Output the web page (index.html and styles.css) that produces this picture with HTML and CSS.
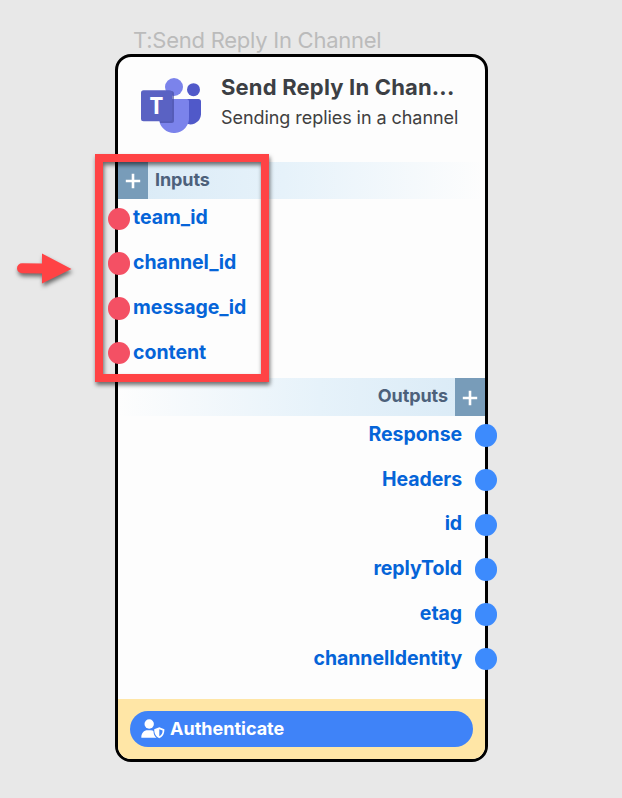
FILE: index.html
```html
<!DOCTYPE html>
<html lang="en">
<head>
<meta charset="utf-8">
<title>Send Reply In Channel</title>
<link rel="stylesheet" href="styles.css">
</head>
<body>
<main class="canvas">
  <section class="node">
    <div class="node-label">T:Send Reply In Channel</div>
    <div class="card">
      <header class="head">
        <svg class="logo" width="62" height="58" viewBox="0 0 62 58">
          <circle cx="53.500" cy="12.700" r="6.500" fill="#5059c9"/>
          <path d="M44 22H58.500Q61 22 61 24.500V37.500A10.500 10.500 0 0 1 44 45Z" fill="#5059c9"/>
          <circle cx="34" cy="10" r="9" fill="#7b83eb"/>
          <path d="M19 22H46.500Q49 22 49 24.500V40A15 15 0 0 1 19 42Z" fill="#7b83eb"/>
          <path d="M19 14H31.500Q34 14 34 16.500V43.500Q34 46 31.500 46H20Z" fill="#40469c" opacity=".65"/>
          <rect x="1" y="13.300" width="31" height="31" rx="2.500" fill="#5a62c3"/>
          <text x="16.500" y="37" text-anchor="middle" class="logo-letter">T</text>
        </svg>
        <div class="head-text">
          <h1 class="title">Send Reply In Chan...</h1>
          <p class="subtitle">Sending replies in a channel</p>
        </div>
      </header>
      <div class="bar bar-inputs">
        <button class="add"><svg width="16" height="16" viewBox="0 0 16 16"><path d="M8 .8V15.200M.8 8H15.200"/></svg></button>
        <span class="bar-name">Inputs</span>
      </div>
      <ul class="ports inputs">
        <li><i class="dot"></i><span>team_id</span></li>
        <li><i class="dot"></i><span>channel_id</span></li>
        <li><i class="dot"></i><span>message_id</span></li>
        <li><i class="dot"></i><span>content</span></li>
      </ul>
      <div class="bar bar-outputs">
        <span class="bar-name">Outputs</span>
        <button class="add"><svg width="16" height="16" viewBox="0 0 16 16"><path d="M8 .8V15.200M.8 8H15.200"/></svg></button>
      </div>
      <ul class="ports outputs">
        <li><span>Response</span><i class="dot"></i></li>
        <li><span>Headers</span><i class="dot"></i></li>
        <li><span>id</span><i class="dot"></i></li>
        <li><span>replyToId</span><i class="dot"></i></li>
        <li><span>etag</span><i class="dot"></i></li>
        <li><span>channelIdentity</span><i class="dot"></i></li>
      </ul>
      <footer class="foot">
        <button class="auth">
          <svg width="24" height="20" viewBox="0 0 24 20">
            <circle cx="8.200" cy="5" r="4.700" fill="#fff"/>
            <path d="M.3 18.500C.3 14 3 11.300 6.500 11.300H10C11.200 11.300 12 11.600 12.500 12C12.500 15 13.500 17.500 15.500 18.800H1.200Q.3 18.800 .3 18.500Z" fill="#fff"/>
            <path d="M18.300 8.300L23.400 10.200C23.400 14.500 22 17.600 18.300 19.200C14.600 17.600 13.200 14.500 13.200 10.200Z" fill="#fff" stroke="#3f83f8" stroke-width=".9" paint-order="stroke" stroke-linejoin="round"/>
            <path d="M18.300 10.200L21.600 11.500C21.500 14.300 20.500 16.200 18.300 17.300Z" fill="#3f83f8"/>
          </svg>
          <span>Authenticate</span>
        </button>
      </footer>
    </div>
  </section>
  <div class="highlight"></div>
  <svg class="arrow" width="70" height="44" viewBox="0 0 70 44">
    <path d="M12 13.300L32 13.500V3.500L61.500 19L32 33.500V23.500L12 23.300A5 5 0 0 1 12 13.300Z" fill="#ff4345"/>
  </svg>
</main>
</body>
</html>
```
FILE: styles.css
```css
* { box-sizing: border-box; }

body {
  margin: 0;
  background: #e8e8e8;
  font-family: Inter, "Liberation Sans", sans-serif;
}

.canvas {
  position: relative;
  width: 622px;
  height: 798px;
  overflow: hidden;
  padding: 27px 0 0 115px;
}

.node { width: 373px; }

.node-label {
  height: 27px;
  padding-left: 18px;
  font-size: 22px;
  line-height: 27px;
  letter-spacing: -.25px;
  color: #bbb;
  white-space: nowrap;
}

.card {
  display: flex;
  flex-direction: column;
  height: 707.500px;
  border: 3px solid #000;
  border-radius: 16px;
  background: #fdfdfd;
}

.head {
  display: flex;
  height: 104.500px;
  padding: 20px 0 0 22px;
}

.logo { flex: none; }

.logo-letter {
  font: 700 23px "Open Sans", sans-serif;
  fill: #fff;
}

.head-text { padding-left: 19px; }

.title {
  margin: -4px 0 0;
  font-size: 22px;
  font-weight: 700;
  line-height: 28px;
  letter-spacing: .18px;
  color: #3c3f44;
  white-space: nowrap;
}

.subtitle {
  margin: 4px 0 0;
  font-size: 18px;
  line-height: 26px;
  letter-spacing: -.06px;
  color: #404040;
  white-space: nowrap;
}

.bar {
  display: flex;
  flex: none;
  height: 37.500px;
}

.bar-inputs { background: linear-gradient(90deg, #d9eaf6, #e6f2fa 45%, #fdfdfd); }

.bar-outputs {
  justify-content: flex-end;
  background: linear-gradient(270deg, #d9eaf6, #e6f2fa 45%, #fdfdfd);
}

.bar-name {
  padding: 0 7px;
  font-size: 18px;
  font-weight: 700;
  line-height: 36px;
  letter-spacing: -.08px;
  color: #4d617b;
}

.add {
  display: flex;
  align-items: center;
  justify-content: center;
  width: 30px;
  padding: 2px 0 0;
  border: 0;
  background: #789cb9;
}

.add path { stroke: #fff; stroke-width: 2.600; }

.ports {
  margin: 0;
  padding: 0;
  list-style: none;
  font-size: 19.500px;
  font-weight: 700;
  letter-spacing: -.05px;
  color: #0564d8;
}

.ports li {
  display: flex;
  align-items: center;
  height: 44.750px;
}

.ports span { padding-bottom: 3px; }

.dot {
  flex: none;
  width: 22.400px;
  height: 22.400px;
  border-radius: 50%;
}

.inputs { height: 179px; margin-top: -2.500px; margin-bottom: 2.500px; }
.inputs li { gap: 3px; margin-left: -10.300px; }
.inputs .dot { background: #f45064; }

.outputs { margin-top: -2.500px; }
.outputs li { justify-content: flex-end; gap: 12.500px; margin-right: -12px; }
.outputs .dot { background: #3d8bfd; }

.foot {
  height: 59.500px;
  margin-top: auto;
  padding: 12px;
  border-radius: 0 0 13px 13px;
  background: #ffe6a6;
}

.auth {
  display: flex;
  align-items: center;
  gap: 5px;
  width: 100%;
  height: 35.500px;
  padding: 0 11px;
  border: 0;
  border-radius: 18px;
  background: #3f83f8;
  color: #fff;
  font: 700 18px Inter, sans-serif;
}

.highlight {
  position: absolute;
  left: 95px;
  top: 154px;
  width: 174px;
  height: 228px;
  border: 8px solid #ff4345;
  filter: drop-shadow(1px 3px 2px rgba(0, 0, 0, .55));
}

.arrow {
  position: absolute;
  left: 10px;
  top: 250px;
  filter: drop-shadow(1px 3px 2px rgba(0, 0, 0, .55));
}
```
